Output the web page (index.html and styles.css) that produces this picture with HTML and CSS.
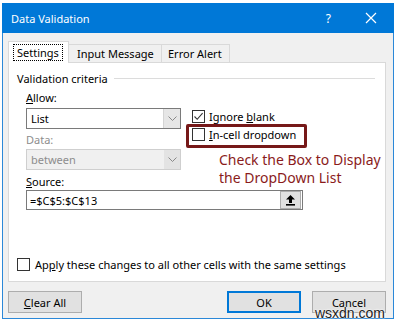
FILE: index.html
```html
<!DOCTYPE html>
<html lang="en">
<head>
  <meta charset="UTF-8" />
  <title>Data Validation</title>
  <link rel="stylesheet" href="styles.css">
</head>
<body>
  <div class="window">
    <div class="titlebar">
      <span class="title">Data Validation</span>
      <span class="help">?</span>
      <svg class="close" width="12" height="12" viewBox="0 0 12 12"><path d="M1 1L11 11M11 1L1 11" stroke="#fff" stroke-width="1.2"/></svg>
    </div>

    <div class="content">
      <div class="tabs">
        <div class="tab active"><span class="focus">Settings</span></div>
        <div class="tab">Input Message</div>
        <div class="tab">Error Alert</div>
      </div>

      <div class="panel">
        <div class="group-title"><span>Validation criteria</span><div class="rule"></div></div>

        <div class="criteria">
          <div class="left-col">
            <div class="label"><u>A</u>llow:</div>
            <div class="select">
              <span class="val">List</span>
              <span class="drop"><svg width="9" height="6" viewBox="0 0 9 6"><path d="M0.5 0.5L4.5 4.5L8.5 0.5" fill="none" stroke="#888" stroke-width="1"/></svg></span>
            </div>
            <div class="label disabled">Data:</div>
            <div class="select disabled">
              <span class="val">between</span>
              <span class="drop"><svg width="9" height="6" viewBox="0 0 9 6"><path d="M0.5 0.5L4.5 4.5L8.5 0.5" fill="none" stroke="#888" stroke-width="1"/></svg></span>
            </div>
          </div>

          <div class="right-col">
            <label class="check">
              <span class="box"><svg width="11" height="11" viewBox="0 0 11 11"><path d="M1.5 5.5L4.2 8.3L9.6 2.2" fill="none" stroke="#333" stroke-width="1.1"/></svg></span>
              <span>Ignore <u>b</u>lank</span>
            </label>
            <div class="highlight">
              <label class="check">
                <span class="box"></span>
                <span><u>I</u>n-cell dropdown</span>
              </label>
            </div>
            <div class="note">Check the Box to Display<br>the DropDown List</div>
          </div>
        </div>

        <div class="label source-label"><u>S</u>ource:</div>
        <div class="source">
          <span class="val">=$C$5:$C$13</span>
          <span class="pick"><svg width="11" height="12" viewBox="0 0 11 12"><path d="M5.5 1L10 5.5H7V9H4V5.5H1Z" fill="#000"/><rect x="1" y="10" width="9" height="1.6" fill="#000"/></svg></span>
        </div>

        <label class="check apply">
          <span class="box"></span>
          <span>Ap<u>p</u>ly these changes to all other cells with the same settings</span>
        </label>
      </div>

      <div class="footer">
        <button class="btn"><u>C</u>lear All</button>
        <div class="spacer"></div>
        <button class="btn default">OK</button>
        <button class="btn">Cancel</button>
      </div>
    </div>
  </div>
  <div class="watermark">wsxdn.com</div>
</body>
</html>
```

FILE: styles.css
```css
body {
  margin: 0;
  background: #fff;
  font-family: "Noto Sans", "Liberation Sans", sans-serif;
  font-size: 11px;
  color: #000;
  width: 397px;
  height: 323px;
  overflow: hidden;
  position: relative;
}

.window {
  margin: 3px 0 0 2px;
  width: 390px;
  height: 315px;
  background: #f0f0f0;
  border: 1px solid #2b88d8;
  border-top: none;
  display: flex;
  flex-direction: column;
}

.titlebar {
  height: 30px;
  flex-shrink: 0;
  margin: 0 -1px;
  background: #0078d7;
  color: #fff;
  display: flex;
  align-items: center;
  padding: 0 0 0 9px;
}

.title {
  font-size: 11px;
  flex: 1;
}

.help {
  font-size: 12px;
  margin-right: 34px;
}

.close {
  margin-right: 17px;
}

.content {
  flex: 1;
  padding: 8px 7px 0 5px;
  display: flex;
  flex-direction: column;
}

.tabs {
  display: flex;
  align-items: flex-end;
  height: 21px;
  flex-shrink: 0;
}

.tab {
  height: 18px;
  line-height: 17px;
  padding: 0 6px;
  border: 1px solid #d9d9d9;
  border-bottom: none;
  border-left: none;
  background: #f0f0f0;
  box-sizing: border-box;
  white-space: nowrap;
}

.tab.active {
  height: 22px;
  margin-bottom: -1px;
  background: #fff;
  border: 1px solid #d9d9d9;
  border-bottom: none;
  padding: 2px 4px 0;
  width: 61px;
  position: relative;
  z-index: 1;
}

.focus {
  display: inline-block;
  border: 1px dotted #000;
  line-height: 15px;
  padding: 0 3px;
}

.tabs .tab:nth-child(2) {
  width: 93px;
  padding-left: 8px;
}

.tabs .tab:nth-child(3) {
  width: 68px;
  padding-left: 6px;
}

.panel {
  height: 220px;
  flex-shrink: 0;
  background: #fff;
  border: 1px solid #d9d9d9;
  box-sizing: border-box;
  padding: 7px 10px 0 8px;
  display: flex;
  flex-direction: column;
}

.group-title {
  display: flex;
  align-items: center;
  height: 16px;
}

.group-title .rule {
  flex: 1;
  height: 1px;
  background: #dcdcdc;
  margin-left: 6px;
}

.criteria {
  display: flex;
  align-items: flex-start;
  height: 84px;
  padding-left: 9px;
}

.left-col {
  width: 155px;
  flex-shrink: 0;
}

.label {
  height: 16px;
  line-height: 16px;
  margin-top: 4px;
}

.label.disabled {
  color: #8d8d8d;
  margin-top: 3px;
}

.select {
  height: 21px;
  border: 1px solid #7a7a7a;
  box-sizing: border-box;
  display: flex;
  align-items: center;
  background: #fff;
  margin-top: 2px;
}

.select .val {
  flex: 1;
  padding-left: 4px;
}

.select .drop {
  width: 16px;
  height: 19px;
  background: #e6e6e6;
  border-left: 1px solid #d4d4d4;
  display: flex;
  align-items: center;
  justify-content: center;
}

.select.disabled {
  background: #f0f0f0;
  border-color: #cfcfcf;
  color: #8d8d8d;
  margin-top: 1px;
}

.select.disabled .drop {
  background: #e3e3e3;
  border-left: none;
}

.right-col {
  margin-left: 11px;
  padding-top: 22px;
  display: flex;
  flex-direction: column;
}

.check {
  display: flex;
  align-items: center;
  height: 16px;
  gap: 4px;
  white-space: nowrap;
}

.box {
  width: 11px;
  height: 11px;
  border: 1px solid #333;
  background: #fff;
  display: inline-flex;
  align-items: center;
  justify-content: center;
  flex-shrink: 0;
}

.highlight {
  margin-left: -6px;
  width: 121px;
  height: 24px;
  box-sizing: border-box;
  border: 3px solid #761818;
  border-radius: 2px;
  padding: 0 0 4px 3px;
  display: flex;
  align-items: center;
}

.note {
  color: #8a1b1b;
  font-size: 14px;
  line-height: 18px;
  margin: 3px 0 0 27px;
  white-space: nowrap;
}

.source-label {
  padding-left: 9px;
}

.source {
  margin-left: 9px;
  width: 277px;
  height: 20px;
  flex-shrink: 0;
  box-sizing: border-box;
  border: 1px solid #7a7a7a;
  display: flex;
  align-items: center;
}

.source .val {
  flex: 1;
  padding-left: 3px;
}

.source .pick {
  width: 19px;
  height: 16px;
  margin-right: 1px;
  background: #e1e1e1;
  border: 1px solid #adadad;
  display: flex;
  align-items: center;
  justify-content: center;
}

.apply {
  margin-top: 46px;
  gap: 5px;
}

.footer {
  display: flex;
  margin-top: 9px;
  gap: 11px;
}

.spacer {
  flex: 1;
}

.btn {
  width: 74px;
  height: 22px;
  background: #e1e1e1;
  border: 1px solid #adadad;
  font-family: inherit;
  font-size: 11px;
  padding: 0;
  color: #000;
}

.btn.default {
  border: 2px solid #0078d7;
}

.watermark {
  position: absolute;
  right: 12px;
  bottom: 2px;
  font-family: "Liberation Sans", sans-serif;
  font-size: 14px;
  color: #222;
  text-shadow: 0 0 2px #fff, 0 0 2px #fff;
}
```
